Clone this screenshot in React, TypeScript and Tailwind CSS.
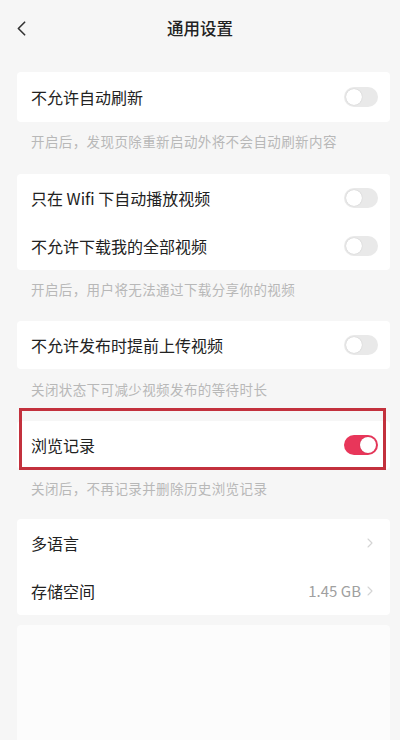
import { ChevronLeft, ChevronRight } from 'lucide-react'

const FONT = { fontFamily: '"Noto Sans CJK SC", "Noto Sans", sans-serif' }

function Toggle({ on = false }: { on?: boolean }) {
  return (
    <div
      className={`flex h-[20px] w-[34px] items-center rounded-full px-[2px] ${
        on ? 'justify-end bg-[#e8365a]' : 'justify-start bg-[#e9e9e9]'
      }`}
    >
      <div className="h-[16px] w-[16px] rounded-full bg-white shadow-[0_0_1px_rgba(0,0,0,0.25)]" />
    </div>
  )
}

function Row({ label, on, right }: { label: string; on?: boolean; right?: React.ReactNode }) {
  return (
    <div className="flex h-[48px] items-center justify-between pl-[14px] pr-[12px]">
      <span className="text-[16px] text-[#222]">{label}</span>
      {right ?? <Toggle on={on} />}
    </div>
  )
}

function Desc({ text, h = 'h-[38px]' }: { text: string; h?: string }) {
  return (
    <div className={`flex ${h} items-center pl-[14px] text-[13.5px] tracking-[0.4px] text-[#b8b8b8]`}>
      {text}
    </div>
  )
}

export default function App() {
  return (
    <div style={FONT} className="h-[740px] w-[400px] overflow-hidden bg-[#f6f6f6]">
      {/* 顶栏 */}
      <div className="relative flex h-[56px] items-center justify-center">
        <ChevronLeft className="absolute left-[9px] top-[16px] h-[25px] w-[25px] text-[#333]" strokeWidth={1.6} />
        <span className="text-[16.5px] font-medium text-[#222]">通用设置</span>
      </div>

      <div className="ml-[17px] mr-[10px]">
        <div className="mt-[16px] rounded-[4px] bg-white">
          <div className="flex h-[50px] items-center justify-between pl-[14px] pr-[12px]">
            <span className="text-[16px] text-[#222]">不允许自动刷新</span>
            <Toggle />
          </div>
        </div>
        <Desc text="开启后，发现页除重新启动外将不会自动刷新内容" h="h-[38px]" />

        <div className="mt-[14px] rounded-[4px] bg-white">
          <Row label="只在 Wifi 下自动播放视频" />
          <Row label="不允许下载我的全部视频" />
        </div>
        <Desc text="开启后，用户将无法通过下载分享你的视频" />

        <div className="mt-[13px] rounded-[4px] bg-white">
          <Row label="不允许发布时提前上传视频" />
        </div>
        <Desc text="关闭状态下可减少视频发布的等待时长" h="h-[40px]" />

        <div className="relative mt-[12px] rounded-[4px] bg-white">
          <Row label="浏览记录" on />
          <div className="pointer-events-none absolute -top-[13px] bottom-[-1px] left-[2px] right-[4px] border-[3px] border-[#c3313d]" />
        </div>
        <Desc text="关闭后，不再记录并删除历史浏览记录" h="h-[39px]" />

        <div className="mt-[11px] rounded-[4px] bg-white">
          <Row
            label="多语言"
            right={<ChevronRight className="h-[16px] w-[16px] text-[#d4d4d4]" strokeWidth={1.6} />}
          />
          <Row
            label="存储空间"
            right={
              <span className="flex items-center gap-[1px] text-[15px] text-[#a0a0a0]">
                1.45 GB
                <ChevronRight className="h-[16px] w-[16px] text-[#d4d4d4]" strokeWidth={1.6} />
              </span>
            }
          />
        </div>

        <div className="mt-[10px] h-[120px] rounded-[4px] bg-[#fcfcfc]" />
      </div>
    </div>
  )
}
